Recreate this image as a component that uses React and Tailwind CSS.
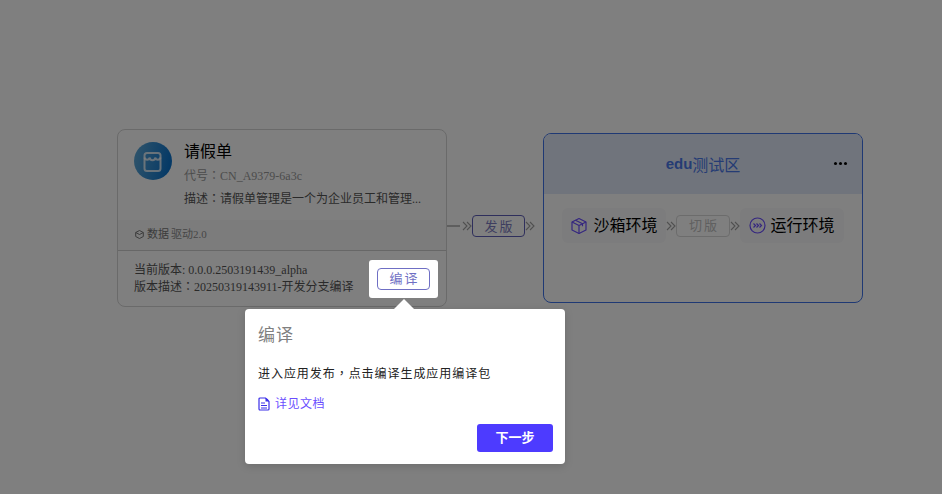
import React from "react";

const serif = "font-['Liberation_Serif','Noto_Sans_CJK_SC',serif]";

function Colon() {
  return <span className="font-['Noto_Sans_CJK_TC']">：</span>;
}

function Chevrons() {
  return (
    <svg width="10" height="10" viewBox="0 0 10 10" fill="none" stroke="#a0a0a0" strokeWidth="1.100" className="shrink-0">
      <path d="M1 1l4 4-4 4M5 1l4 4-4 4" />
    </svg>
  );
}

function StoreIcon() {
  return (
    <svg width="38" height="38" viewBox="0 0 38 38" fill="none">
      <defs>
        <linearGradient id="g" x1="0" y1="0.4" x2="1" y2="0.6">
          <stop offset="0" stopColor="#5ba6d6" />
          <stop offset="1" stopColor="#0670cc" />
        </linearGradient>
      </defs>
      <circle cx="19" cy="19" r="19" fill="url(#g)" />
      <rect x="10.500" y="11" width="16" height="18" rx="2.500" stroke="#fff" strokeOpacity=".78" strokeWidth="2" />
      <path d="M10.500 15.500a2.700 2.700 0 0 0 5.300 0 2.700 2.700 0 0 0 5.400 0 2.700 2.700 0 0 0 5.300 0" stroke="#fff" strokeOpacity=".78" strokeWidth="2" />
    </svg>
  );
}

function CubeIcon() {
  return (
    <svg width="18" height="18" viewBox="0 0 18 18" fill="none" stroke="#6a4dff" strokeWidth="1.200" strokeLinejoin="round">
      <path d="M9 1.500l7 3.500v8l-7 3.500-7-3.500v-8z" />
      <path d="M2 5l7 3.500L16 5M9 8.500v8M5.500 3.200l7 3.600v2.400" />
    </svg>
  );
}

function RunIcon() {
  return (
    <svg width="17" height="17" viewBox="0 0 17 17" fill="none" stroke="#6a4dff" strokeWidth="1.200">
      <circle cx="8.500" cy="8.500" r="7.500" />
      <path d="M4.500 6.500l2 2-2 2M7.500 6.500l2 2-2 2M10.500 6.500l2 2-2 2" />
    </svg>
  );
}

function DocIcon() {
  return (
    <svg width="12" height="14" viewBox="0 0 12 14" fill="none" stroke="#3a2ee8" strokeWidth="1.200">
      <path d="M1 2a1 1 0 0 1 1-1h5.500L11 4.500V12a1 1 0 0 1-1 1H2a1 1 0 0 1-1-1z" />
      <path d="M3 6h4M3 8.500h6M3 11h6" />
      <path d="M7.500 1.500h1.500l1.500 1.500v1.500h-3z" fill="#3a2ee8" stroke="none" />
    </svg>
  );
}

function Tag({ children, className = "" }) {
  return (
    <div className={`flex shrink-0 items-center justify-center rounded-[4px] border pl-[2px] text-[13px] leading-none tracking-[2px] ${className}`}>
      {children}
    </div>
  );
}

export default function App() {
  return (
    <div className={`relative h-[494px] w-[942px] overflow-hidden bg-white ${serif}`}>
      <div className="flex items-start pl-[117px] pt-[129px]">
        {/* App card */}
        <div className="flex h-[178px] w-[330px] shrink-0 flex-col rounded-[8px] border border-[#d4d4d4] bg-white">
          <div className="flex h-[90px] gap-[12px] px-[16px] pt-[12px]">
            <div className="shrink-0"><StoreIcon /></div>
            <div className="min-w-0 flex-1">
              <div className="text-[16px] leading-[20px] text-black">请假单</div>
              <div className="mt-[5px] text-[12px] leading-[16px] text-[#999]">代号<Colon />CN_A9379-6a3c</div>
              <div className="mt-[6px] whitespace-nowrap text-[12px] leading-[16px] text-[#555]">描述<Colon />请假单管理是一个为企业员工和管理...</div>
            </div>
          </div>
          <div className="flex h-[30px] items-center gap-[3px] bg-[#f8f8f8] pl-[17px] pb-[2px] text-[11px] text-[#777]">
            <svg width="9" height="9" viewBox="0 0 9 9" fill="none" stroke="#777" strokeWidth="1">
              <path d="M4.500.5l3.800 2v4l-3.800 2-3.800-2v-4z" />
              <path d="M.700 2.500l3.800 2 3.800-2" />
            </svg>
            <span className="flex gap-[2px]"><span>数据</span><span className="text-[#8f8f8f]">驱动2.0</span></span>
          </div>
          <div className="flex flex-1 items-center justify-between border-t border-[#cfcfcf] pl-[16px] pr-[8px]">
            <div className="text-[12px] leading-[15px] text-[#555]">
              <div>当前版本: 0.0.0.2503191439_alpha</div>
              <div>版本描述<Colon />20250319143911-开发分支编译</div>
            </div>
            <div className="relative z-20 flex h-[38px] w-[69px] items-center justify-center rounded-[3px] bg-white">
              <Tag className="h-[22px] w-[53px] border-[#6f6fc4] text-[#6f6fc4]">编译</Tag>
            </div>
          </div>
        </div>

        {/* Connector */}
        <div className="mt-[86px] flex h-[22px] shrink-0 items-center">
          <div className="mr-[2px] h-[2px] w-[13px] bg-[#bdbdbd]" />
          <Chevrons />
          <Tag className="h-[22px] w-[53px] border-[#5f5fb8] text-[#7c7cc0]">发版</Tag>
          <Chevrons />
        </div>

        {/* Environment */}
        <div className="ml-[8px] mt-[4px] h-[170px] w-[320px] shrink-0 overflow-hidden rounded-[8px] border border-[#3f73e8] bg-white">
          <div className="relative flex h-[60px] items-center justify-center bg-[#e1e9f9] text-[#4a78e8]">
            <span className="flex items-center"><span className="font-['Liberation_Sans'] text-[15px] font-bold">edu</span><span className="font-['Noto_Sans_CJK_SC'] text-[16px]">测试区</span></span>
            <div className="absolute right-[15px] top-[28px] flex gap-[2px]">
              <span className="h-[3px] w-[3px] rounded-full bg-black" />
              <span className="h-[3px] w-[3px] rounded-full bg-black" />
              <span className="h-[3px] w-[3px] rounded-full bg-black" />
            </div>
          </div>
          <div className="flex items-center pl-[18px] pt-[14px]">
            <div className="flex h-[35px] w-[104px] shrink-0 items-center justify-center gap-[5px] rounded-[6px] bg-[#f8f8fa] text-[16px] text-black">
              <CubeIcon /><span>沙箱环境</span>
            </div>
            <Chevrons />
            <Tag className="h-[22px] w-[54px] border-[#d8d8d8] text-[#c0c0c0]">切版</Tag>
            <Chevrons />
            <div className="flex h-[35px] w-[104px] shrink-0 items-center justify-center gap-[4px] rounded-[6px] bg-[#f8f8fa] text-[16px] text-black">
              <RunIcon /><span>运行环境</span>
            </div>
          </div>
        </div>
      </div>

      {/* Mask */}
      <div className="absolute inset-0 z-10 bg-black/50" />

      {/* Popover */}
      <div className="absolute left-[245px] top-[309px] z-30 h-[155px] w-[320px] rounded-[4px] bg-white pl-[13px] pr-[12px] shadow-[0_2px_8px_rgba(0,0,0,0.15)]">
        <div className="absolute left-[148px] top-[-10px] h-0 w-0 border-x-[11px] border-b-[11px] border-x-transparent border-b-white" />
        <div className="pt-[16px] text-[17px] leading-[22px] tracking-[1px] text-[#808080]">编译</div>
        <div className="mt-[17px] text-[12px] leading-[18px] tracking-[0.95px] text-[#222]">进入应用发布<span className="font-['Noto_Sans_CJK_TC']">，</span>点击编译生成应用编译包</div>
        <div className="mt-[12px] flex items-center gap-[5px] text-[12px] leading-[18px] tracking-[0.5px] text-[#6a4dff]">
          <DocIcon /><span>详见文档</span>
        </div>
        <div className="mt-[11px] flex justify-end">
          <div className="flex h-[28px] w-[76px] items-center justify-center rounded-[3px] bg-[#4d3bff] text-[13px] font-bold text-white">下一步</div>
        </div>
      </div>
    </div>
  );
}
